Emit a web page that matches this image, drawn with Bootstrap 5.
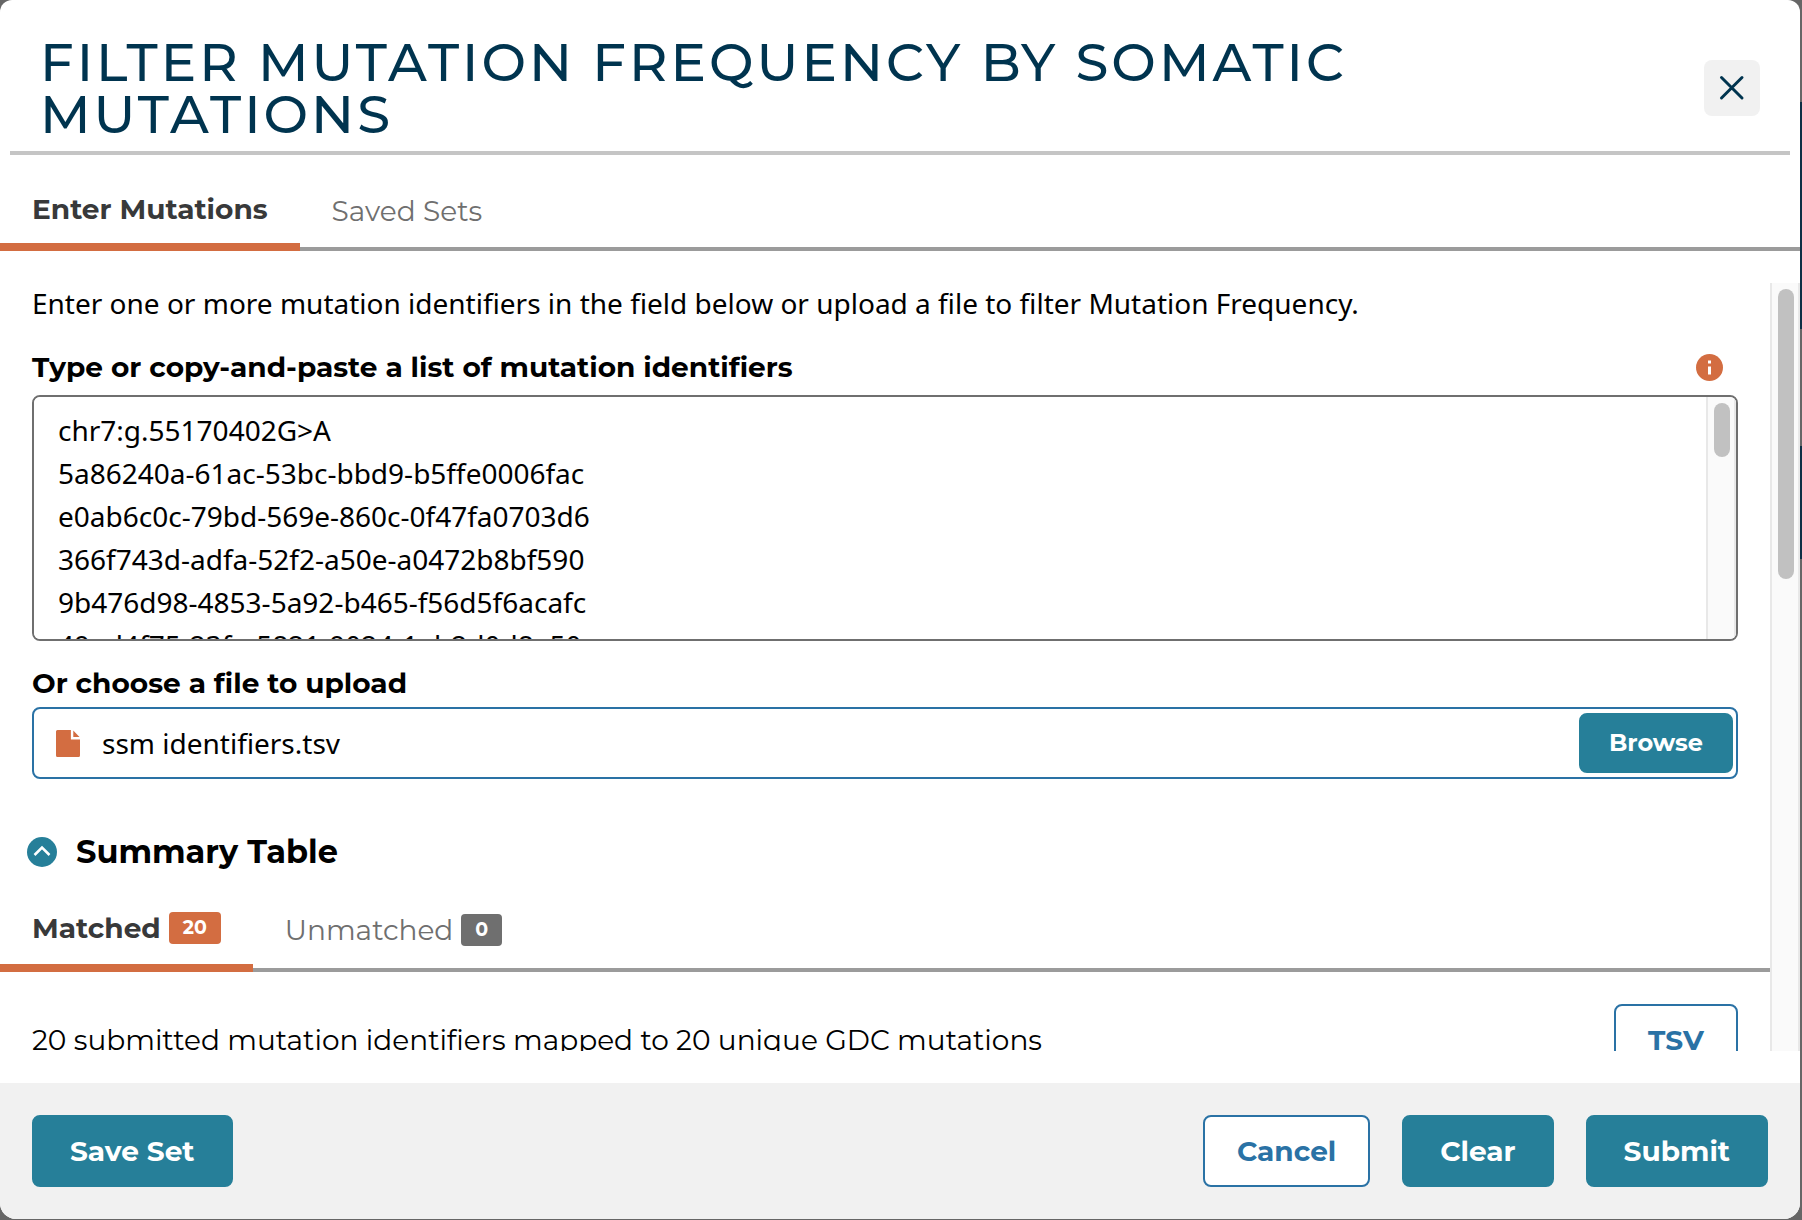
<!DOCTYPE html>
<html lang="en">
<head>
<meta charset="utf-8">
<meta name="viewport" content="width=device-width, initial-scale=1">
<title>Filter Mutation Frequency by Somatic Mutations</title>
<link rel="stylesheet" href="https://cdn.jsdelivr.net/npm/bootstrap@5.3.0/dist/css/bootstrap.min.css">
<style>
:root{--head:"Montserrat","Inter",sans-serif;--copy:"Noto Sans",sans-serif;--teal:#267f99;--navy:#00344f;--blue:#2a72a5;--orange:#d36d41;--grey:#6f6f6f}
html,body{height:100%}
body{font-family:var(--head);font-size:28px;line-height:36px;color:#000;overflow:hidden;
  background:linear-gradient(#666 0 102px,#0d2f45 102px 329px,#666 329px 446px,#0d2f45 446px 559px,#666 559px)}
/* dialog frame */
.dialog{height:calc(100vh - 1px);margin-right:2px;background:#fff;border-radius:12px 12px 16px 16px;overflow:hidden}
.dialog-head{margin:0 10px;padding:36px 30px 11px 30px;border-bottom:4px solid #c5c5c5}
.dialog-title{font-size:53px;line-height:52px;font-weight:500;letter-spacing:3px;color:var(--navy);text-transform:uppercase;max-width:1400px}
.close-btn{width:56px;height:56px;border-radius:8px;background:#f1f1f1;border:0;padding:0;flex:none;color:var(--navy)}
.dialog-foot{background:#f1f1f1;padding:32px}
.foot-group{gap:32px}
/* tabs */
.tab-row{border-bottom:4px solid #9b9b9b;flex-wrap:nowrap}
.tab-row .nav-link{font-family:inherit;border:0;border-radius:0;background:none;height:62px;padding:0 32px 18px;line-height:40px;color:var(--grey);display:flex;align-items:center;gap:8px;margin-bottom:-4px}
.tab-row .nav-link.active{color:#38393a;font-weight:700;border-bottom:8px solid var(--orange);background:none;padding-bottom:14px}
.main-tabs{margin-top:34px}
.count-tabs{margin-top:34px}
.count-tabs .nav-link{height:66px}
.count{font-size:19px;line-height:32px;font-weight:700;color:#fff;background:var(--grey);border-radius:4px;padding:0 14px}
.active .count{background:var(--orange)}
/* scrolling body */
.scroll-area{margin:32px 0;min-height:0}
.scroll-body{overflow:hidden;min-width:0;padding-top:2px}
.scroll-track{flex:none;width:30px;background:#fafafa;border:solid #e8e8e8;border-width:0 2px;padding:6px}
.scroll-thumb{width:16px;border-radius:8px;background:#c1c1c1}
.thumb-sm{height:54px}
.thumb-lg{height:290px}
.px-field{padding:0 32px}
.copy-text{font-family:var(--copy)}
.field-label{font-weight:700;line-height:36px}
.label-row{margin:28px 0 10px}
.info{margin-right:15px}
.id-box{height:246px;border:2px solid var(--grey);border-radius:8px;overflow:hidden}
.id-box:focus-within{border-color:var(--blue)}
.id-text{border:0;outline:0;resize:none;padding:12px 24px;line-height:43px;font-family:var(--copy);color:#000;overflow-y:scroll;scrollbar-width:none}
.id-text::-webkit-scrollbar{display:none}
.upload-label{margin:24px 0 6px}
.file-box{height:72px;border:2px solid var(--blue);border-radius:8px;padding:0 3px 0 22px}
.file-name{border:0;outline:0;background:none;font-family:var(--copy);color:#000;padding:0;min-width:0;margin-left:22px}
.collapse-btn{border:0;background:none;padding:0;margin:53px 0 0 -5px;gap:19px;font-size:32px;line-height:40px;font-weight:700;color:#000}
.result-row{margin-top:32px}
/* buttons */
.btn{font-size:28px;line-height:36px;font-weight:700;border-radius:8px;border:2px solid var(--teal);padding:16px 36px}
.btn-teal,.btn-teal:hover{background:var(--teal);color:#fff}
.btn-line,.btn-line:hover{background:#fff;color:var(--blue);border-color:var(--blue);padding-left:32px;padding-right:32px}
.btn-browse{font-size:24px;padding:10px 28px}
</style>
</head>
<body>
<div class="dialog d-flex flex-column" role="dialog" aria-modal="true" aria-labelledby="dlg-title">
  <header class="dialog-head d-flex justify-content-between align-items-center flex-shrink-0">
    <h1 class="dialog-title mb-0" id="dlg-title">Filter Mutation Frequency by Somatic Mutations</h1>
    <button class="close-btn d-flex align-items-center justify-content-center" type="button" aria-label="Close">
      <svg width="26" height="26" viewBox="0 0 26 26" fill="none" stroke="currentColor" stroke-width="3" stroke-linecap="round"><path d="M2.500 2.500 23 23M23 2.500 2.500 23"/></svg>
    </button>
  </header>
  <ul class="nav tab-row main-tabs flex-shrink-0" role="tablist">
    <li class="nav-item"><button class="nav-link active" type="button" role="tab" aria-selected="true">Enter Mutations</button></li>
    <li class="nav-item"><button class="nav-link" type="button" role="tab">Saved Sets</button></li>
  </ul>
  <div class="scroll-area d-flex flex-grow-1">
    <div class="scroll-body flex-grow-1">
      <div class="px-field">
        <p class="copy-text mb-0">Enter one or more mutation identifiers in the field below or upload a file to filter Mutation Frequency.</p>
        <div class="label-row d-flex justify-content-between align-items-center">
          <label class="field-label" for="ids">Type or copy-and-paste a list of mutation identifiers</label>
          <svg class="info" width="27" height="27" viewBox="0 0 27 27" role="img" aria-label="Information"><circle cx="13.500" cy="13.500" r="13.500" fill="#d36d41"/><path d="M12 6.500h3v3h-3zM12 12.500h3v8h-3z" fill="#fff"/></svg>
        </div>
        <div class="id-box d-flex">
          <textarea class="id-text flex-grow-1" id="ids">chr7:g.55170402G>A
5a86240a-61ac-53bc-bbd9-b5ffe0006fac
e0ab6c0c-79bd-569e-860c-0f47fa0703d6
366f743d-adfa-52f2-a50e-a0472b8bf590
9b476d98-4853-5a92-b465-f56d5f6acafc
49ed4f75-23fa-5821-9024-1eb2d0d8e50</textarea>
          <div class="scroll-track"><div class="scroll-thumb thumb-sm"></div></div>
        </div>
        <label class="field-label upload-label d-block" for="file">Or choose a file to upload</label>
        <div class="file-box d-flex align-items-center">
          <svg class="flex-shrink-0" width="24" height="27" viewBox="0 0 25 27" preserveAspectRatio="none" fill="#d36d41"><path d="M1.500 0H15.500V9.500H25V25.500Q25 27 23.500 27H1.500Q0 27 0 25.500V1.500Q0 0 1.500 0ZM18 .5 24.500 7H18Z"/></svg>
          <input class="file-name flex-grow-1" id="file" type="text" readonly value="ssm identifiers.tsv">
          <button class="btn btn-teal btn-browse" type="button">Browse</button>
        </div>
        <button class="collapse-btn d-flex align-items-center" type="button" aria-expanded="true">
          <svg width="30" height="30" viewBox="0 0 30 30" fill="none"><circle cx="15" cy="15" r="15" fill="#267f99"/><path d="M7.500 18 15 10.500 22.500 18" stroke="#fff" stroke-width="2.500"/></svg>
          Summary Table
        </button>
      </div>
      <ul class="nav tab-row count-tabs" role="tablist">
        <li class="nav-item"><button class="nav-link active" type="button" role="tab" aria-selected="true">Matched <span class="count">20</span></button></li>
        <li class="nav-item"><button class="nav-link" type="button" role="tab">Unmatched <span class="count">0</span></button></li>
      </ul>
      <div class="result-row px-field d-flex justify-content-between align-items-center">
        <p class="mb-0">20 submitted mutation identifiers mapped to 20 unique GDC mutations</p>
        <button class="btn btn-line" type="button">TSV</button>
      </div>
    </div>
    <div class="scroll-track"><div class="scroll-thumb thumb-lg"></div></div>
  </div>
  <footer class="dialog-foot d-flex align-items-center justify-content-between flex-shrink-0">
    <button class="btn btn-teal" type="button">Save Set</button>
    <div class="d-flex foot-group">
      <button class="btn btn-line" type="button">Cancel</button>
      <button class="btn btn-teal" type="button">Clear</button>
      <button class="btn btn-teal" type="button">Submit</button>
    </div>
  </footer>
</div>
<script src="https://cdn.jsdelivr.net/npm/bootstrap@5.3.0/dist/js/bootstrap.bundle.min.js"></script>
</body>
</html>
